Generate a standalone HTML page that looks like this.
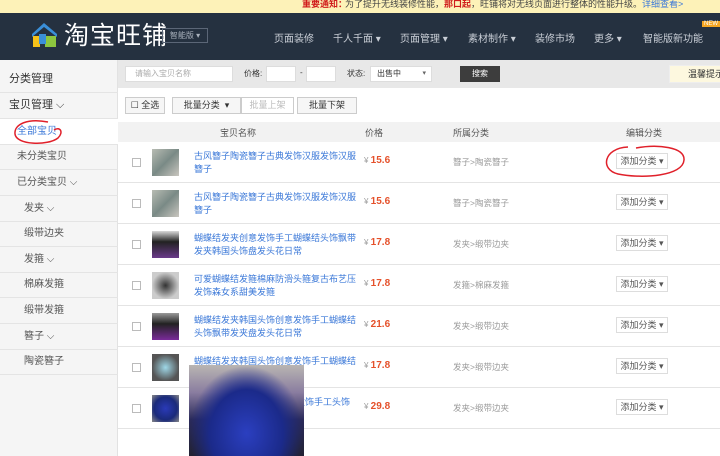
<!DOCTYPE html><html><head><meta charset="utf-8"><style>
*{margin:0;padding:0;box-sizing:border-box}
body{width:720px;height:456px;overflow:hidden;background:#fff;font-family:"Liberation Sans","Noto Sans CJK SC",sans-serif;font-size:10px;color:#333;position:relative}
.a{position:absolute}
.notice{left:0;top:0;width:720px;height:13px;background:#fdf2b8;font-size:9px;line-height:8px;color:#444;white-space:nowrap;overflow:hidden}
.nav{left:0;top:13px;width:720px;height:47px;background:#253140}
.nav span{position:absolute;top:17px;color:#c9ced6;font-size:10px}
.tool{left:118px;top:60px;width:602px;height:28px;background:#e8e8e8}
.side{left:0;top:60px;width:118px;height:396px;background:#f5f5f5;border-right:1px solid #e2e2e2}
.si{position:absolute;left:0;width:118px;height:25.6px;border-bottom:1px solid #e4e4e4;font-size:10px;line-height:25px;color:#555}
.inp{background:#fff;border:1px solid #ddd;height:16px}
.btn{position:absolute;top:97px;height:17px;border:1px solid #ccc;background:#f6f6f6;font-size:9px;line-height:15px;text-align:center;color:#333}
.th{left:118px;top:122px;width:602px;height:20px;background:#f2f2f2;font-size:9px;color:#555}
.row{position:absolute;left:118px;width:602px;height:41px;border-bottom:1px solid #e4e4e4}
.cb{position:absolute;left:14px;top:16px;width:9px;height:9px;border:1px solid #bbb;background:#fff}
.th2{position:absolute;left:34px;top:7px;width:27px;height:27px}
.nm{position:absolute;left:76px;top:8px;width:166px;color:#3b78d8;font-size:9px;line-height:13px}
.pr{position:absolute;left:246px;top:13px;color:#e5512b;font-weight:bold;font-size:10px}
.pr i{font-style:normal;color:#999;font-weight:normal;font-size:8px}
.ct{position:absolute;left:335px;top:14px;color:#999;font-size:8.5px}
.ad{position:absolute;left:498px;top:11px;width:52px;height:16px;border:1px solid #ddd;background:#fff;font-size:9px;line-height:14px;text-align:center;color:#555}
</style></head><body>
<div class="a notice"><span style="position:absolute;left:302px;top:0;color:#d01b1b;font-weight:bold">重要通知：</span><span style="position:absolute;left:345px;top:0">为了提升无线装修性能，<b style="color:#d01b1b">那口起</b>，旺铺将对无线页面进行整体的性能升级。<span style="color:#3b78d8">详细查看&gt;</span></span></div>
<div class="a nav">
<svg class="a" style="left:30px;top:8px" width="30" height="30" viewBox="0 0 30 30"><path d="M14 2 L27 13 L27 16 L14 6 L2 16 L2 13Z" fill="#3a8fd8"/><rect x="3" y="15" width="7" height="11" fill="#f6c21a"/><rect x="15" y="15" width="11" height="11" fill="#8dc63f"/><rect x="9" y="13" width="7" height="10" fill="#3a8fd8"/></svg>
<div class="a" style="left:64px;top:7px;color:#fff;font-size:25px;letter-spacing:1px;line-height:32px">淘宝旺铺</div>
<div class="a" style="left:162px;top:15px;width:46px;height:15px;border:1px solid #5b6677;color:#aab2bd;font-size:8px;line-height:13px;text-align:center">智能版 ▾</div>
<span style="left:274px">页面装修</span><span style="left:333px">千人千面 ▾</span><span style="left:400px">页面管理 ▾</span><span style="left:468px">素材制作 ▾</span><span style="left:535px">装修市场</span><span style="left:594px">更多 ▾</span><span style="left:643px">智能版新功能</span>
<div class="a" style="left:702px;top:8px;background:#f5a623;color:#fff;font-size:6px;padding:0 2px">NEW</div>
</div>
<div class="a side">
<div class="si" style="top:7px;padding-left:9px;font-size:11px;color:#333">分类管理</div>
<div class="si" style="top:33px;padding-left:9px;font-size:11px;color:#333">宝贝管理 ⌵</div>
<div class="si" style="top:59px;padding-left:17px;color:#3b78d8;background:#fff">全部宝贝</div>
<div class="si" style="top:84px;padding-left:17px">未分类宝贝</div>
<div class="si" style="top:110px;padding-left:17px">已分类宝贝 ⌵</div>
<div class="si" style="top:136px;padding-left:24px">发夹 ⌵</div>
<div class="si" style="top:161px;padding-left:24px">缎带边夹</div>
<div class="si" style="top:187px;padding-left:24px">发箍 ⌵</div>
<div class="si" style="top:212px;padding-left:24px">棉麻发箍</div>
<div class="si" style="top:238px;padding-left:24px">缎带发箍</div>
<div class="si" style="top:264px;padding-left:24px">簪子 ⌵</div>
<div class="si" style="top:289px;padding-left:24px">陶瓷簪子</div>
</div>
<svg class="a" style="left:8px;top:118px" width="56" height="30"><path d="M40 4 C20 0 6 6 7 16 C8 27 40 28 50 20 C56 14 52 8 46 12" fill="none" stroke="#e0202a" stroke-width="1.5"/></svg>
<div class="a tool">
<div class="a inp" style="left:7px;top:6px;width:108px;font-size:8px;color:#aaa;padding-left:9px;line-height:14px">请输入宝贝名称</div>
<div class="a" style="left:126px;top:8px;font-size:8px">价格:</div>
<div class="a inp" style="left:148px;top:6px;width:30px"></div>
<div class="a" style="left:182px;top:8px;font-size:8px">-</div>
<div class="a inp" style="left:188px;top:6px;width:30px"></div>
<div class="a" style="left:229px;top:8px;font-size:8px">状态:</div>
<div class="a inp" style="left:252px;top:6px;width:62px;font-size:8px;padding-left:6px;line-height:14px">出售中 <span style="position:absolute;right:5px;font-size:7px;color:#666">▾</span></div>
<div class="a" style="left:342px;top:6px;width:40px;height:16px;background:#3d3d3d;color:#fff;font-size:8px;line-height:16px;text-align:center">搜索</div>
<div class="a" style="left:551px;top:5px;width:60px;height:18px;background:#fdf8df;border:1px solid #eee;font-size:9px;line-height:16px;text-align:right;padding-right:4px">温馨提示</div>
</div>
<div class="btn" style="left:125px;width:40px">☐ 全选</div>
<div class="btn" style="left:172px;width:69px">批量分类 &nbsp;▾</div>
<div class="btn" style="left:241px;width:53px;color:#bbb;background:#fff">批量上架</div>
<div class="btn" style="left:297px;width:60px">批量下架</div>
<div class="a th"><span class="a" style="left:102px;top:4px">宝贝名称</span><span class="a" style="left:247px;top:4px">价格</span><span class="a" style="left:335px;top:4px">所属分类</span><span class="a" style="left:508px;top:4px">编辑分类</span></div>
<div class="row" style="top:142px"><div class="cb"></div><div class="th2" style="background:linear-gradient(135deg,#b8bcb3,#7a8a86 50%,#c9c6bf)"></div><div class="nm">古风簪子陶瓷簪子古典发饰汉服发饰汉服簪子</div><div class="pr"><i>¥ </i>15.6</div><div class="ct">簪子&gt;陶瓷簪子</div><div class="ad">添加分类 ▾</div></div>
<div class="row" style="top:183px"><div class="cb"></div><div class="th2" style="background:linear-gradient(135deg,#b8bcb3,#7a8a86 50%,#c9c6bf)"></div><div class="nm">古风簪子陶瓷簪子古典发饰汉服发饰汉服簪子</div><div class="pr"><i>¥ </i>15.6</div><div class="ct">簪子&gt;陶瓷簪子</div><div class="ad">添加分类 ▾</div></div>
<div class="row" style="top:224px"><div class="cb"></div><div class="th2" style="background:linear-gradient(180deg,#d9d9d9,#222 40%,#6a3a8a)"></div><div class="nm">蝴蝶结发夹创意发饰手工蝴蝶结头饰飘带发夹韩国头饰盘发头花日常</div><div class="pr"><i>¥ </i>17.8</div><div class="ct">发夹&gt;缎带边夹</div><div class="ad">添加分类 ▾</div></div>
<div class="row" style="top:265px"><div class="cb"></div><div class="th2" style="background:radial-gradient(#333,#ccc 70%)"></div><div class="nm">可爱蝴蝶结发箍棉麻防滑头箍复古布艺压发饰森女系甜美发箍</div><div class="pr"><i>¥ </i>17.8</div><div class="ct">发箍&gt;棉麻发箍</div><div class="ad">添加分类 ▾</div></div>
<div class="row" style="top:306px"><div class="cb"></div><div class="th2" style="background:linear-gradient(180deg,#999,#222 40%,#7a2a9a)"></div><div class="nm">蝴蝶结发夹韩国头饰创意发饰手工蝴蝶结头饰飘带发夹盘发头花日常</div><div class="pr"><i>¥ </i>21.6</div><div class="ct">发夹&gt;缎带边夹</div><div class="ad">添加分类 ▾</div></div>
<div class="row" style="top:347px"><div class="cb"></div><div class="th2" style="background:radial-gradient(#9fd8e8,#555 70%)"></div><div class="nm">蝴蝶结发夹韩国头饰创意发饰手工蝴蝶结头</div><div class="pr"><i>¥ </i>17.8</div><div class="ct">发夹&gt;缎带边夹</div><div class="ad">添加分类 ▾</div></div>
<div class="row" style="top:388px"><div class="cb"></div><div class="th2" style="background:radial-gradient(#2a3ab8,#1a2a7a 60%,#888)"></div><div class="nm" style="left:178px;width:60px">发饰手工头饰</div><div class="pr"><i>¥ </i>29.8</div><div class="ct">发夹&gt;缎带边夹</div><div class="ad">添加分类 ▾</div></div>
<div class="a" style="left:189px;top:365px;width:115px;height:91px;background:radial-gradient(ellipse at 50% 75%,#2b3fc0,#1b2a8a 45%,transparent 70%),linear-gradient(180deg,#b9b5b2,#8a7da0 30%,#2a2a5a 60%,#223)"></div>
<svg class="a" style="left:598px;top:142px" width="90" height="40"><path d="M30 5 C5 6 2 28 20 32 C45 37 85 34 86 18 C87 5 60 2 38 6" fill="none" stroke="#e0202a" stroke-width="1.5"/></svg>
</body></html>
